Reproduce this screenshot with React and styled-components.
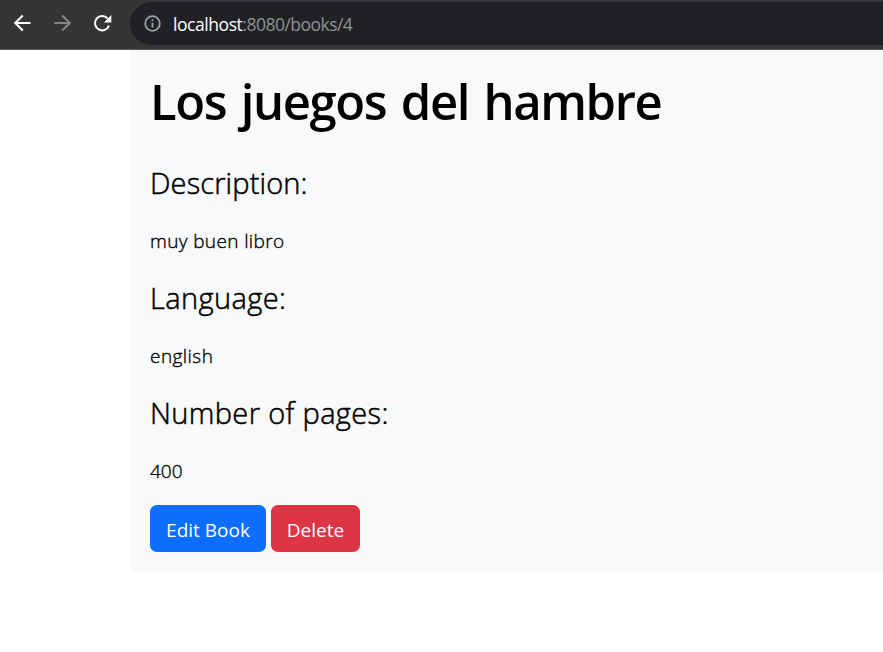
import React from "react";
import styled, { createGlobalStyle } from "styled-components";

const GlobalStyle = createGlobalStyle`
  *, *::before, *::after { box-sizing: border-box; }
  body {
    margin: 0;
    background: #fff;
    color: #000;
    font-family: "Segoe UI", "Open Sans", "Noto Sans", sans-serif;
    overflow: hidden;
  }
  h1, p { margin: 0; }
`;

const BrowserBar = styled.header`
  display: flex;
  height: 50px;
  padding-top: 2px;
  background: #353535;
  border-bottom: 1px solid #5b5b5b;
`;

const NavButtons = styled.nav`
  display: flex;
  width: 130px;
  height: 41px;
  padding-left: 10px;
  gap: 16px;
  align-items: center;
`;

const NavButton = styled.button`
  display: flex;
  width: 24px;
  height: 24px;
  padding: 0;
  border: 0;
  background: none;
  color: ${(p) => (p.$muted ? "#868686" : "#fff")};
`;

const AddressBar = styled.div`
  flex: 1;
  display: flex;
  align-items: center;
  height: 43px;
  padding-left: 14px;
  border-radius: 22px 0 0 22px;
  background: #202124;
  color: #9aa0a6;
`;

const Url = styled.span`
  margin-left: 12px;
  font-size: 17.5px;
  line-height: 24px;
  letter-spacing: -0.52px;
  white-space: nowrap;
  color: #8f9194;
`;

const Host = styled.span`
  letter-spacing: -0.44px;
  color: #fff;
`;

const BookPanel = styled.main`
  margin-left: 130px;
  height: 522px;
  padding: 20px;
  background: #f8f9fb;
`;

const Title = styled.h1`
  margin-bottom: 29px;
  padding-top: 1px;
  font-size: 49px;
  line-height: 60px;
  font-weight: 600;
  letter-spacing: -1.4px;
  word-spacing: 3.2px;
  white-space: nowrap;
`;

const Label = styled.p`
  margin-bottom: 20px;
  font-size: 29px;
  line-height: 45px;
  font-weight: 300;
  letter-spacing: ${(p) => p.$spacing};
  -webkit-text-stroke: 0.5px currentColor;
`;

const Value = styled.p`
  margin-bottom: 19px;
  padding-top: 1px;
  font-size: 19px;
  line-height: 30px;
  font-weight: 300;
  letter-spacing: ${(p) => p.$spacing};
  -webkit-text-stroke: 0.35px currentColor;
`;

const Actions = styled.div`
  display: flex;
  gap: 5px;
`;

const Button = styled.button`
  width: ${(p) => p.$width};
  height: 47px;
  padding: 2px 0 0;
  border: 0;
  border-radius: 7px;
  background: ${(p) => (p.$danger ? "#dc3545" : "#0d6efd")};
  color: #fff;
  font-family: inherit;
  font-size: 19px;
  line-height: 30px;
  white-space: nowrap;
`;

const fields = [
  { label: "Description:", labelSpacing: "0.12px", value: "muy buen libro", valueSpacing: "0.38px" },
  { label: "Language:", labelSpacing: "0.38px", value: "english", valueSpacing: "0.45px" },
  { label: "Number of pages:", labelSpacing: "0.36px", value: "400", valueSpacing: "0" },
];

const BackIcon = () => (
  <svg width="24" height="24" viewBox="0 0 24 24" fill="none" stroke="currentColor" strokeWidth="2">
    <path d="M20.5 12H5.5M12.8 4.5L5.2 12L12.8 19.5" />
  </svg>
);

const ForwardIcon = () => (
  <svg width="24" height="24" viewBox="0 0 24 24" fill="none" stroke="currentColor" strokeWidth="2">
    <path d="M4.5 12H19.5M12.2 4.5L19.8 12L12.2 19.5" />
  </svg>
);

const ReloadIcon = () => (
  <svg width="24" height="24" viewBox="0 0 24 24" fill="none" stroke="currentColor" strokeWidth="2">
    <path d="M19 14.6A7.2 7.2 0 1 1 17.6 7.4" />
    <path d="M21.3 4V11.4H14Z" fill="currentColor" stroke="none" />
  </svg>
);

const InfoIcon = () => (
  <svg width="17" height="17" viewBox="0 0 17 17" fill="none" stroke="currentColor" strokeWidth="1.8">
    <circle cx="8.5" cy="8.5" r="7.3" />
    <path d="M8.5 7.5V12.5M8.5 4.3V6.1" />
  </svg>
);

export default function App() {
  return (
    <>
      <GlobalStyle />
      <BrowserBar>
        <NavButtons>
          <NavButton aria-label="Back"><BackIcon /></NavButton>
          <NavButton aria-label="Forward" $muted><ForwardIcon /></NavButton>
          <NavButton aria-label="Reload"><ReloadIcon /></NavButton>
        </NavButtons>
        <AddressBar>
          <InfoIcon />
          <Url><Host>localhost</Host>:8080/books/4</Url>
        </AddressBar>
      </BrowserBar>
      <BookPanel>
        <Title>Los juegos del hambre</Title>
        {fields.map((f) => (
          <React.Fragment key={f.label}>
            <Label $spacing={f.labelSpacing}>{f.label}</Label>
            <Value $spacing={f.valueSpacing}>{f.value}</Value>
          </React.Fragment>
        ))}
        <Actions>
          <Button $width="116px">Edit Book</Button>
          <Button $width="89px" $danger>Delete</Button>
        </Actions>
      </BookPanel>
    </>
  );
}
